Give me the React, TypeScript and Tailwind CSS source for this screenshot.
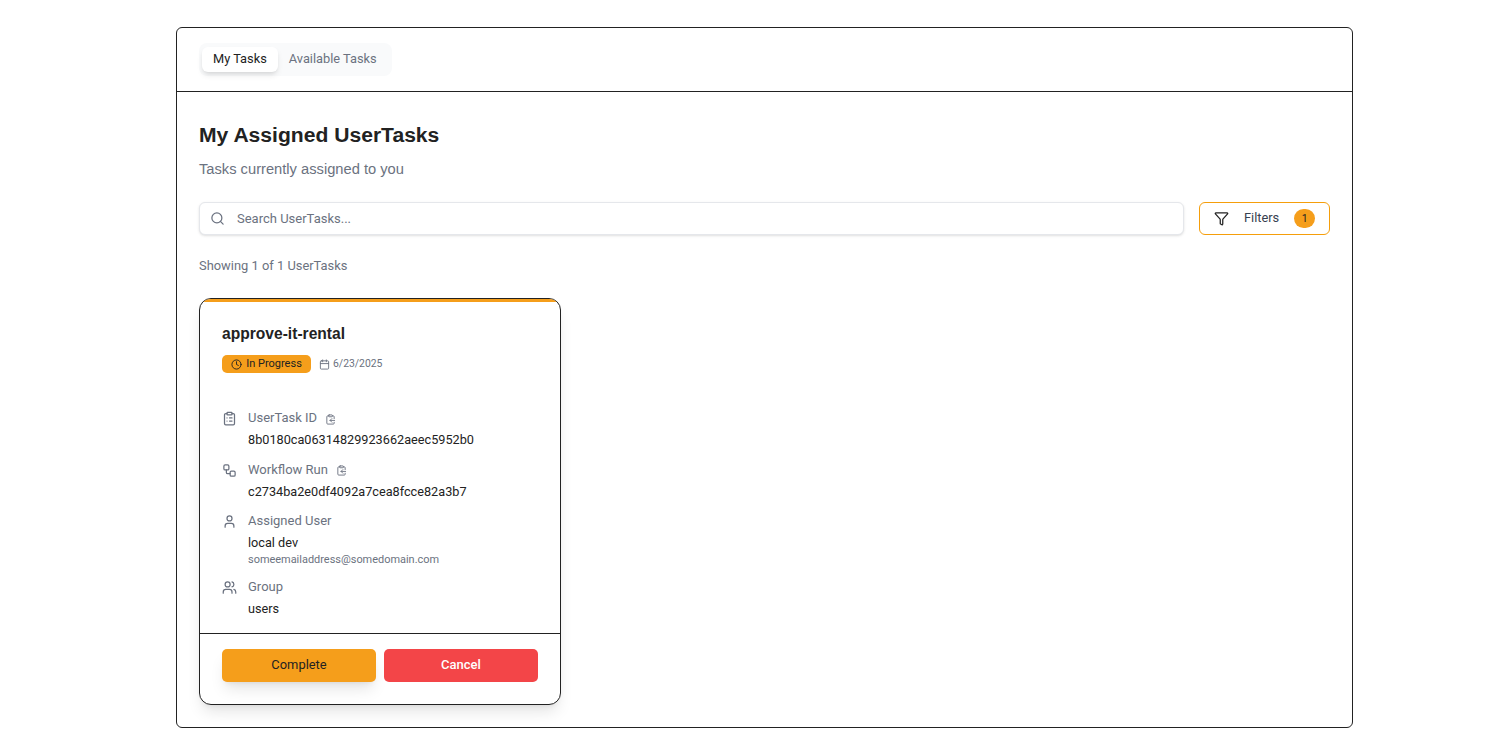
import React from 'react';
import { Search, Filter, Clock, Calendar, ClipboardList, ClipboardCopy, Workflow, User, Users } from 'lucide-react';

const font = { body: 'font-["Roboto",sans-serif]', head: 'font-["Liberation_Sans",sans-serif]' };

function InfoRow({ icon, label, copy, children }: { icon: React.ReactNode; label: string; copy?: boolean; children: React.ReactNode }) {
  return (
    <div className="flex gap-[11px]">
      <div className="w-[15px] pt-[3px] text-[#6b7280] shrink-0">{icon}</div>
      <div>
        <div className="flex items-center h-[20px] text-[13px] text-[#6b7280]">
          {label}
          {copy && <ClipboardCopy size={11} className="ml-[8px] mt-[2px]" />}
        </div>
        <div className="mt-[2px]">{children}</div>
      </div>
    </div>
  );
}

export default function App() {
  return (
    <div className={`min-h-[755px] bg-white pl-[176px] pr-[132px] pt-[27px] text-[#222222] ${font.body}`}>
      <div className="h-[701px] border border-[#222222] rounded-[6px] bg-white">
        <div className="h-[64px] border-b border-[#222222] px-[22px] pt-[15px]">
          <div className="inline-flex h-[33px] items-center rounded-[8px] bg-[#f9fafb] py-[4px] pl-[3px] pr-[4px] text-[12.8px]">
            <div className="h-[25px] flex items-center px-[11px] pb-[1px] rounded-[6px] bg-white shadow-md text-[#222222]">My Tasks</div>
            <div className="h-[25px] flex items-center px-[11px] pb-[1px] text-[#6b7280]">Available Tasks</div>
          </div>
        </div>

        <div className="px-[22px]">
          <h1 className={`mt-[29px] text-[21.1px] leading-[28px] font-bold text-[#222222] ${font.head}`}>My Assigned UserTasks</h1>
          <p className={`mt-[8px] text-[14.7px] leading-[24px] text-[#6b7280] ${font.head}`}>Tasks currently assigned to you</p>

          <div className="mt-[21px] flex gap-[15px]">
            <div className="flex-1 h-[33px] flex items-center rounded-[6px] border border-[#e5e7eb] bg-white shadow-sm pl-[10px] text-[13px] text-[#6b7280]">
              <Search size={15} className="mr-[12px]" />
              Search UserTasks...
            </div>
            <div className="w-[131px] h-[33px] flex items-center rounded-[6px] border border-[#f59e0b] bg-white pl-[14px] text-[12.8px] text-[#374151]">
              <Filter size={15} className="text-[#222222]" />
              <span className="ml-[15px] -mt-[2px]">Filters</span>
              <span className="ml-[15px] w-[21px] h-[19px] rounded-full bg-[#f59e1b] flex items-center justify-center text-[10.5px] text-[#222222]">1</span>
            </div>
          </div>

          <p className="mt-[21px] text-[12.9px] leading-[20px] text-[#6b7280]">Showing 1 of 1 UserTasks</p>

          <div className="mt-[22px] w-[362px] h-[407px] border border-[#222222] rounded-[12px] shadow-lg bg-white overflow-hidden flex flex-col">
            <div className="h-[3px] bg-[#f59e1b] shrink-0" />
            <div className="flex-1 px-[22px] pt-[22px]">
              <h2 className={`text-[15.6px] leading-[20px] font-bold text-[#222222] ${font.head}`}>approve-it-rental</h2>
              <div className="mt-[11px] flex items-center">
                <span className="h-[18px] w-[89px] rounded-[5px] bg-[#f59e1b] flex items-center justify-center gap-[4px] text-[11px] text-[#222222]">
                  <Clock size={11} />
                  In Progress
                </span>
                <Calendar size={11} className="ml-[8px] text-[#6b7280]" />
                <span className="ml-[3px] text-[10.4px] text-[#6b7280]">6/23/2025</span>
              </div>

              <div className="mt-[35px] flex flex-col gap-[9.5px] text-[12.7px] leading-[20px] text-[#222222]">
                <InfoRow icon={<ClipboardList size={15} />} label="UserTask ID" copy>
                  8b0180ca06314829923662aeec5952b0
                </InfoRow>
                <InfoRow icon={<Workflow size={15} />} label="Workflow Run" copy>
                  c2734ba2e0df4092a7cea8fcce82a3b7
                </InfoRow>
                <InfoRow icon={<User size={15} />} label="Assigned User">
                  <div>local dev</div>
                  <div className="text-[10.95px] leading-[14.5px] text-[#6b7280]">someemailaddress@somedomain.com</div>
                </InfoRow>
                <InfoRow icon={<Users size={15} />} label="Group">
                  users
                </InfoRow>
              </div>
            </div>
            <div className="h-[71px] shrink-0 border-t border-[#222222] px-[22px] pt-[15px] flex gap-[8px]">
              <button className="flex-1 h-[33px] pb-[1px] rounded-[5px] bg-[#f59e1b] shadow-lg text-[12.9px] text-[#222222]">Complete</button>
              <button className="flex-1 h-[33px] pb-[1px] rounded-[5px] bg-[#f34548] text-[13px] font-medium text-white">Cancel</button>
            </div>
          </div>
        </div>
      </div>
    </div>
  );
}
